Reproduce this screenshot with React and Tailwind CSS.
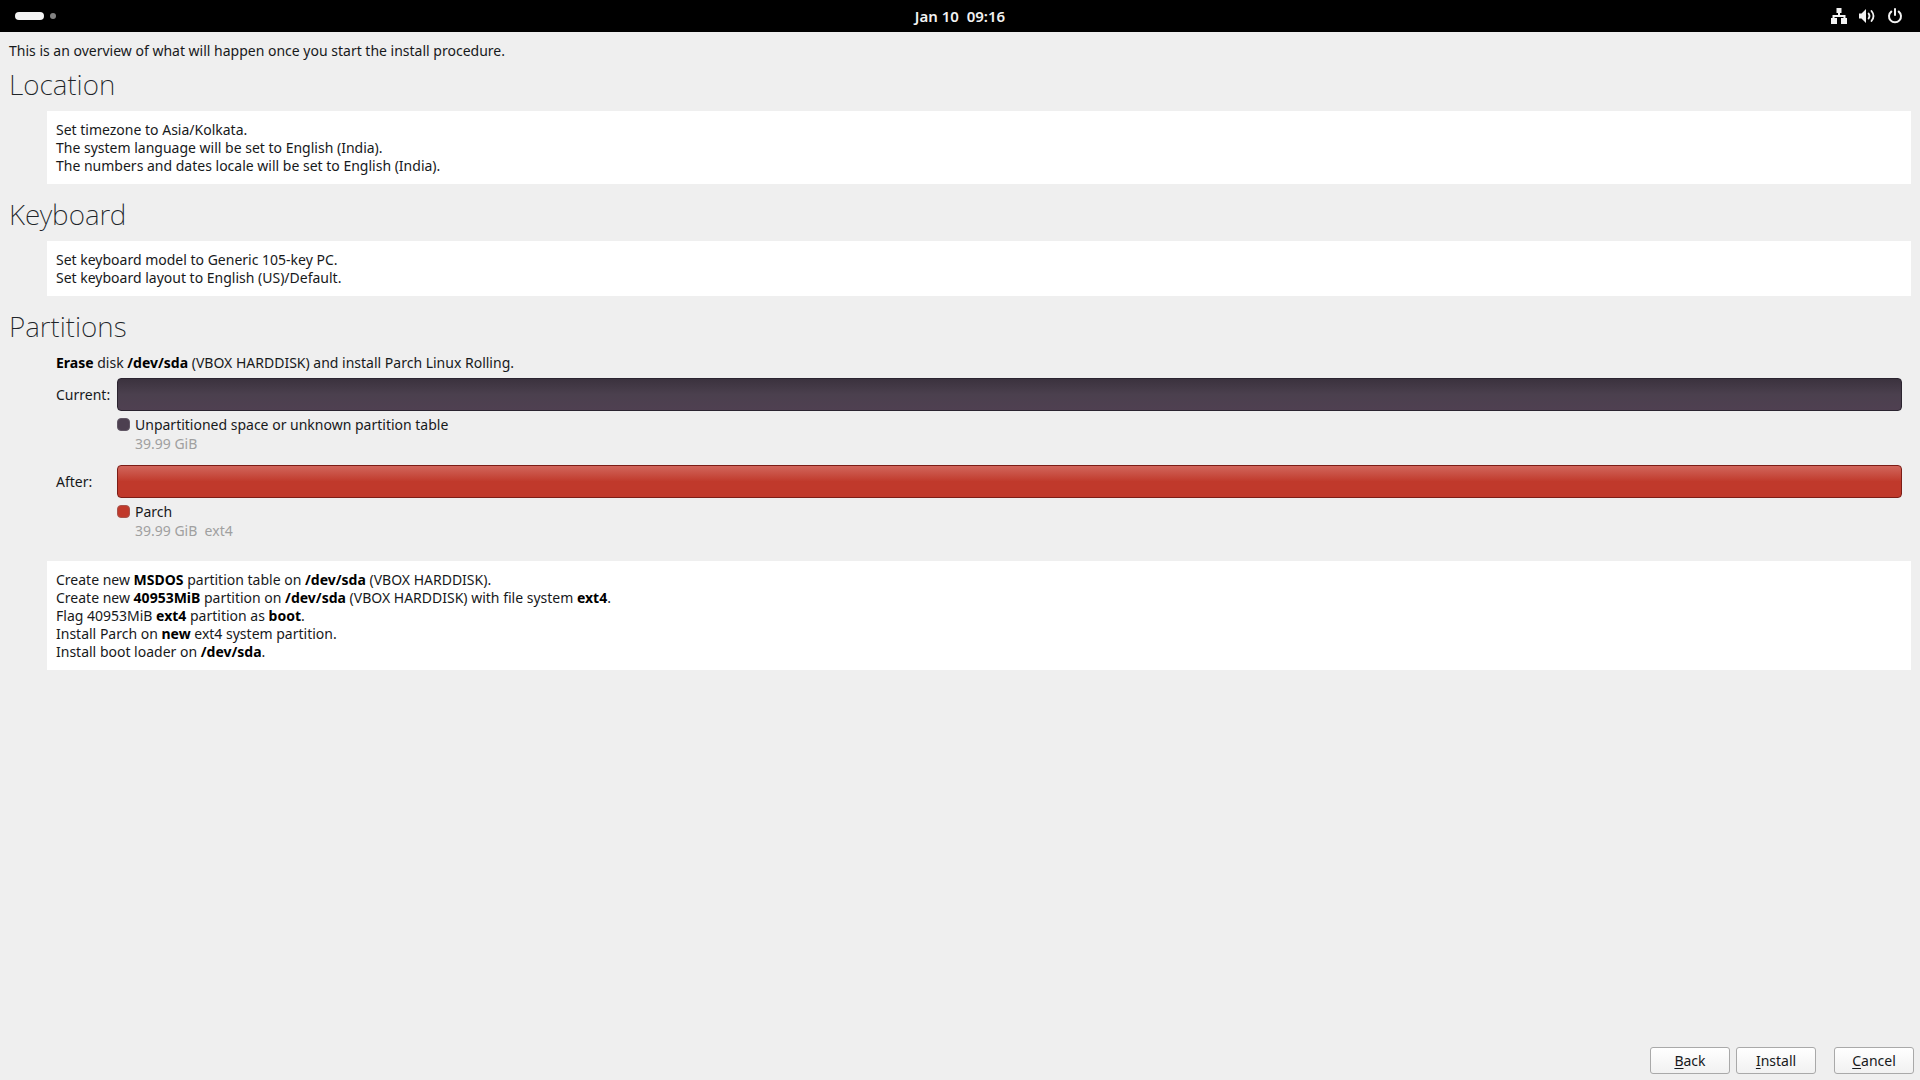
import React from "react";

function B({ children }) {
  return <b className="font-bold text-black">{children}</b>;
}

function Heading({ children }) {
  return <h2 className="text-[28px] leading-[34px] font-extralight text-[#202428]">{children}</h2>;
}

function Card({ lines }) {
  return (
    <div className="ml-[38px] bg-white px-[9px] pt-[10px] pb-[9px]">
      {lines.map((line, i) => (
        <p key={i}>{line}</p>
      ))}
    </div>
  );
}

function DiskRow({ label, barClass, swatchClass, name, detail }) {
  return (
    <div className="grid grid-cols-[61px_1fr] gap-y-[5px]">
      <span className="self-center">{label}</span>
      <div className={"h-[33px] rounded border " + barClass}></div>
      <div className="col-start-2 flex gap-[5px]">
        <span className={"mt-[2px] h-[13px] w-[13px] rounded-sm border " + swatchClass}></span>
        <div>
          <p>{name}</p>
          <p className="mt-px whitespace-pre text-[#a0a0a0]">{detail}</p>
        </div>
      </div>
    </div>
  );
}

function ActionButton({ letter, rest }) {
  return (
    <button
      type="button"
      className="h-[27px] w-20 rounded-[3px] border border-[#a9a9a9] bg-linear-to-b from-white to-[#f1f1f1] text-center"
    >
      <span className="underline underline-offset-2">{letter}</span>
      {rest}
    </button>
  );
}

function TopBar() {
  return (
    <header className="grid h-8 grid-cols-3 items-center bg-black text-white">
      <button type="button" aria-label="Workspaces" className="ml-[15px] flex items-center gap-[6px] justify-self-start">
        <span className="h-2 w-[29px] rounded-full bg-[#f4f4f4]"></span>
        <span className="h-[6px] w-[6px] rounded-full bg-[#828282]"></span>
      </button>
      <button type="button" className="justify-self-center text-[15px] font-semibold whitespace-pre text-[#f2f2f2]">
        {"Jan 10  09:16"}
      </button>
      <div className="mr-[17px] flex items-center gap-3 justify-self-end">
        <svg className="h-4 w-4" viewBox="0 0 16 16" fill="#f2f2f2" aria-hidden="true">
          <path d="M5.500 0h5v5H9v2h5.500v3H16v6h-6v-6h2.500V9h-9v1H6v6H0v-6h1.500V7H7V5H5.500z" />
        </svg>
        <svg className="h-4 w-4" viewBox="0 0 16 16" fill="none" stroke="#f2f2f2" strokeWidth="1.8" strokeLinecap="round" aria-hidden="true">
          <path d="M0 5.500v5h2.500L7 15V1L2.500 5.500z" fill="#f2f2f2" stroke="none" />
          <path d="M9.600 5.500q1.800 2.500 0 5" />
          <path d="M12.500 3q4 5 0 10" />
        </svg>
        <svg className="h-4 w-4" viewBox="0 0 16 16" fill="none" stroke="#f2f2f2" strokeWidth="2" strokeLinecap="round" aria-hidden="true">
          <path d="M8 1v6" />
          <path d="M4.300 3.600a6 6 0 1 0 7.400 0" />
        </svg>
      </div>
    </header>
  );
}

export default function App() {
  return (
    <div className="flex min-h-screen flex-col bg-[#efefef] font-['Noto_Sans','Open_Sans',sans-serif] text-sm leading-[18px] text-[#17191b]">
      <TopBar />
      <main className="flex flex-1 flex-col pt-[10px] pr-[9px] pl-[9px]">
        <p>This is an overview of what will happen once you start the install procedure.</p>
        <section className="mt-[7px] flex flex-col gap-[10px]">
          <Heading>Location</Heading>
          <Card
            lines={[
              "Set timezone to Asia/Kolkata.",
              "The system language will be set to English (India).",
              "The numbers and dates locale will be set to English (India).",
            ]}
          />
        </section>
        <section className="mt-[13px] flex flex-col gap-[10px]">
          <Heading>Keyboard</Heading>
          <Card lines={["Set keyboard model to Generic 105-key PC.", "Set keyboard layout to English (US)/Default."]} />
        </section>
        <section className="mt-[13px] flex flex-col">
          <Heading>Partitions</Heading>
          <div className="mt-[11px] mr-[9px] ml-[47px] flex flex-col">
            <p className="mb-[6px]">
              <B>Erase</B> disk <B>/dev/sda</B> (VBOX HARDDISK) and install Parch Linux Rolling.
            </p>
            <DiskRow
              label="Current:"
              barClass="border-[#2b2430] bg-linear-to-b from-[#3b323e] via-[#4b404e] to-[#4f4051]"
              swatchClass="border-[#625866] bg-[#4d4050]"
              name="Unpartitioned space or unknown partition table"
              detail="39.99 GiB"
            />
            <div className="mt-3">
              <DiskRow
                label="After:"
                barClass="border-[#7c1d16] bg-linear-to-b from-[#d1655b] via-[#c0392b] to-[#c0392b]"
                swatchClass="border-[#a8554d] bg-[#c0392b]"
                name="Parch"
                detail="39.99 GiB  ext4"
              />
            </div>
          </div>
          <div className="mt-[21px]">
            <Card
              lines={[
                <>Create new <B>MSDOS</B> partition table on <B>/dev/sda</B> (VBOX HARDDISK).</>,
                <>Create new <B>40953MiB</B> partition on <B>/dev/sda</B> (VBOX HARDDISK) with file system <B>ext4</B>.</>,
                <>Flag 40953MiB <B>ext4</B> partition as <B>boot</B>.</>,
                <>Install Parch on <B>new</B> ext4 system partition.</>,
                <>Install boot loader on <B>/dev/sda</B>.</>,
              ]}
            />
          </div>
        </section>
      </main>
      <footer className="flex justify-end gap-[6px] pr-[6px] pb-[6px]">
        <ActionButton letter="B" rest="ack" />
        <ActionButton letter="I" rest="nstall" />
        <div className="ml-3 flex">
          <ActionButton letter="C" rest="ancel" />
        </div>
      </footer>
    </div>
  );
}
